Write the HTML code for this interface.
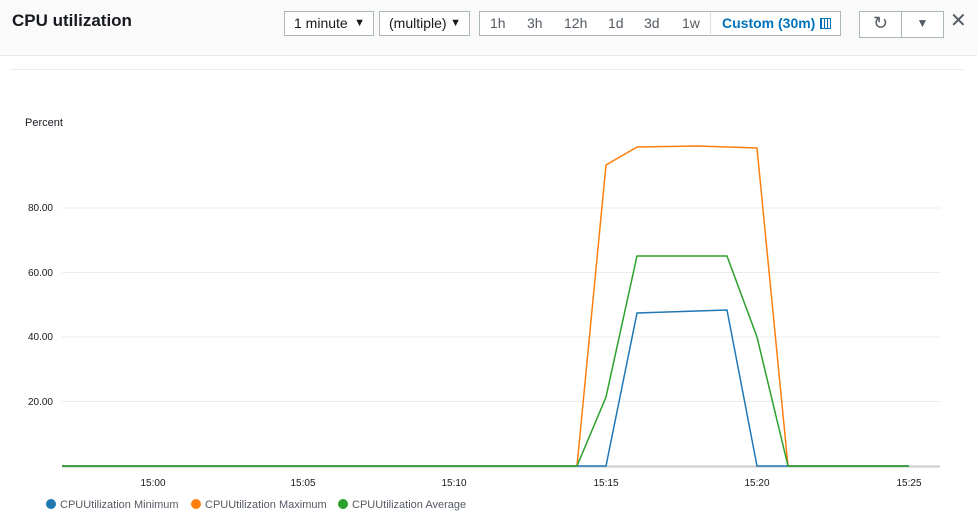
<!DOCTYPE html>
<html><head><style>
body{margin:0;width:977px;height:525px;background:#fff;font-family:"Liberation Sans",sans-serif;position:relative;overflow:hidden}
.hdr{position:absolute;left:0;top:0;width:977px;height:55px;background:#fafafa;border-bottom:1px solid #e8e8e8}
.t{position:absolute;left:12px;top:11px;font-size:17px;font-weight:bold;color:#16191f}
.box{position:absolute;top:11px;height:25px;border:1px solid #aab7b8;background:#fff;box-sizing:border-box;font-size:14px;color:#16191f;line-height:23px}
.tr span{display:inline-block;position:absolute;top:0}
</style></head><body>
<div class="hdr">
<div class="t">CPU utilization</div>
<div class="box" style="left:284px;width:90px;padding-left:9px">1 minute <span style="position:absolute;right:8px;font-size:11px">▼</span></div>
<div class="box" style="left:379px;width:91px;padding-left:9px">(multiple) <span style="position:absolute;right:8px;font-size:11px">▼</span></div>
<div class="box tr" style="left:479px;width:362px;color:#545b64">
<span style="left:10px">1h</span><span style="left:47px">3h</span><span style="left:84px">12h</span><span style="left:128px">1d</span><span style="left:164px">3d</span><span style="left:202px">1w</span>
<span style="left:230px;top:0;height:23px;border-left:1px solid #e0e0e0"></span>
<span style="left:242px;color:#0073bb;font-weight:bold">Custom (30m)</span>
<span style="left:340px;top:6px;width:11px;height:11px;border:1px solid #0073bb;box-sizing:border-box;background:repeating-linear-gradient(90deg,#0073bb 0 1px,transparent 1px 3px),#fff"></span>
</div>
<div class="box" style="left:859px;width:43px;height:27px;text-align:center;font-size:18px;color:#545b64">↻</div>
<div class="box" style="left:901px;width:43px;height:27px;text-align:center;font-size:12px;color:#545b64">▼</div>
<div style="position:absolute;left:950px;top:8px;font-size:20px;color:#545b64">✕</div>
</div>
<div style="position:absolute;left:10px;top:69px;width:955px;height:1px;background:#eaeded"></div>
<svg width="977" height="525" style="position:absolute;left:0;top:0" font-family="Liberation Sans" font-size="10" fill="#16191f">
<text x="25" y="126" font-size="11">Percent</text>
<g stroke="#eaeded" stroke-width="1">
<line x1="62" y1="208" x2="940" y2="208"/><line x1="62" y1="272.5" x2="940" y2="272.5"/><line x1="62" y1="337" x2="940" y2="337"/><line x1="62" y1="401.5" x2="940" y2="401.5"/>
</g>
<line x1="62" y1="466.5" x2="940" y2="466.5" stroke="#ccc" stroke-width="2"/>
<g text-anchor="end"><text x="53" y="211">80.00</text><text x="53" y="276">60.00</text><text x="53" y="340">40.00</text><text x="53" y="405">20.00</text></g>
<g text-anchor="middle"><text x="153" y="486">15:00</text><text x="303" y="486">15:05</text><text x="454" y="486">15:10</text><text x="606" y="486">15:15</text><text x="757" y="486">15:20</text><text x="909" y="486">15:25</text></g>
<g fill="none" stroke-width="1.5">
<polyline stroke="#ff7f0e" points="62,466 577,466 606,165 637,147 697,146 757,148 788,466 909,466"/>
<polyline stroke="#1f77b4" points="62,466 606,466 637,313 727,310 757,466 909,466"/>
<polyline stroke="#2ca02c" points="62,466 577,466 606,397 637,256 727,256 757,337 788,466 909,466"/>
</g>
<g font-size="11" fill="#545b64">
<circle cx="51" cy="504" r="5" fill="#1f77b4"/><text x="60" y="508">CPUUtilization Minimum</text>
<circle cx="196" cy="504" r="5" fill="#ff7f0e"/><text x="205" y="508">CPUUtilization Maximum</text>
<circle cx="343" cy="504" r="5" fill="#2ca02c"/><text x="352" y="508">CPUUtilization Average</text>
</g>
</svg>
</body></html>
